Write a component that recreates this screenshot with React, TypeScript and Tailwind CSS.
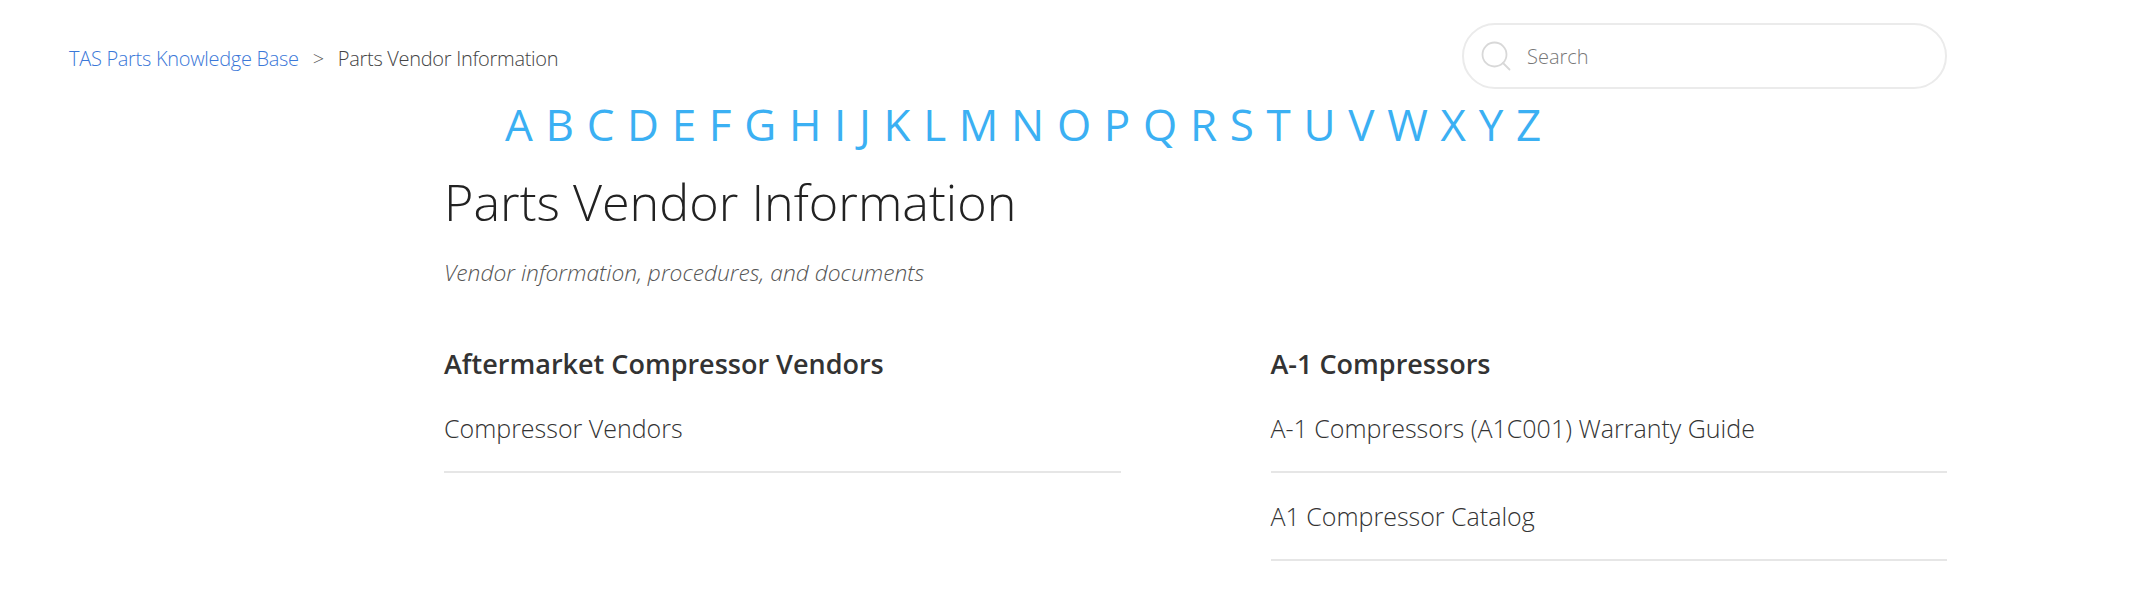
import { Search } from "lucide-react";

const letters = "ABCDEFGHIJKLMNOPQRSTUVWXYZ".split("");

const columns = [
  { title: "Aftermarket Compressor Vendors", items: ["Compressor Vendors"] },
  {
    title: "A-1 Compressors",
    items: ["A-1 Compressors (A1C001) Warranty Guide", "A1 Compressor Catalog"],
  },
];

const App = () => {
  return (
    <div className="min-h-[611px] bg-white font-['Open_Sans',sans-serif] overflow-hidden">
      {/* breadcrumb + search */}
      <div className="flex items-center justify-between pl-[69px] pr-[206px] pt-[23px]">
        <div className="flex items-center pt-[6px] text-[20px] font-light tracking-[-0.3px]">
          <a href="#" className="text-[#3b78d8]">TAS Parts Knowledge Base</a>
          <span className="mx-[14px] text-[#555]">&gt;</span>
          <span className="text-[#444]">Parts Vendor Information</span>
        </div>
        <div className="flex h-[66px] w-[485px] items-center rounded-full border-2 border-[#ebebeb] pl-[14px]">
          <Search className="h-[36px] w-[36px] text-[#d8d8d8]" strokeWidth={1.2} />
          <span className="ml-[13px] pt-[2px] text-[20px] font-light text-[#777]">Search</span>
        </div>
      </div>

      {/* letter index */}
      <div className="flex gap-[12.7px] pl-[505px] pt-[5px] text-[44px] leading-[60px] text-[#3bb0f3]">
        {letters.map((l) => (
          <a href="#" key={l}>{l}</a>
        ))}
      </div>

      {/* content */}
      <div className="pl-[444px] pr-[206px]">
        <h1 className="pt-[13px] text-[50.3px] leading-[70px] font-light text-[#222]">
          Parts Vendor Information
        </h1>
        <p className="pt-[20px] text-[22.8px] leading-[32px] font-light italic text-[#555]">
          Vendor information, procedures, and documents
        </p>
        <div className="grid grid-cols-2 gap-x-[150px] pt-[57px]">
          {columns.map((col) => (
            <div key={col.title}>
              <h2 className="text-[27px] leading-[36px] font-semibold text-[#333]">{col.title}</h2>
              <ul className="pt-[3px]">
                {col.items.map((item) => (
                  <li
                    key={item}
                    className="border-b-2 border-[#e6e6e6] py-[26px] text-[25px] leading-[34px] font-light text-[#333]"
                  >
                    {item}
                  </li>
                ))}
              </ul>
            </div>
          ))}
        </div>
      </div>
    </div>
  );
};

export default App;
